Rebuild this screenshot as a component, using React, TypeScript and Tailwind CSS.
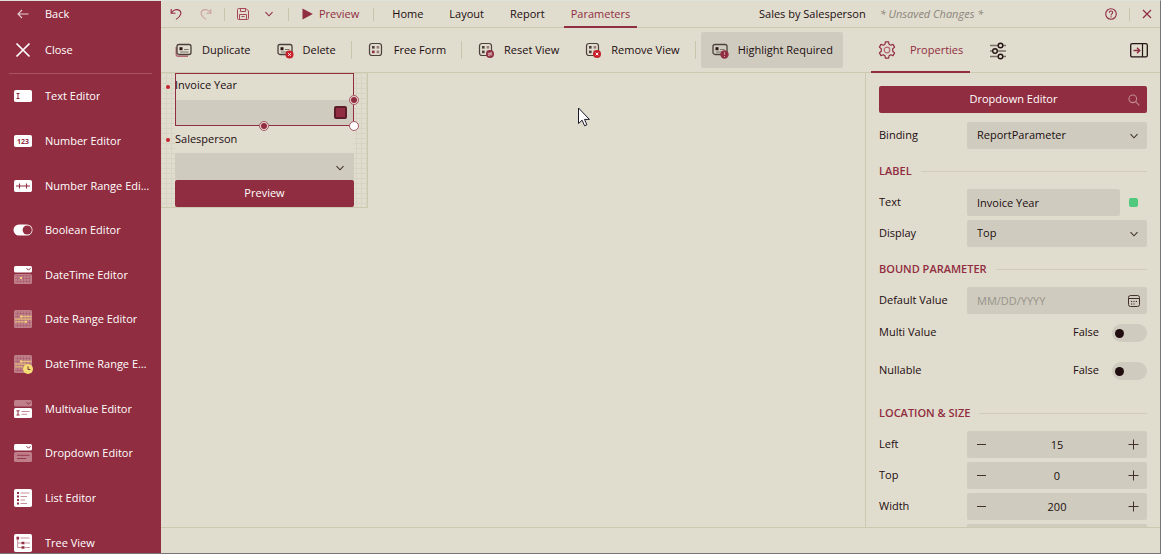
import React, { useState } from 'react';

interface NavItemProps {
  label: string;
  icon: React.ReactNode;
}

interface ToolButtonProps {
  label: string;
  icon: React.ReactNode;
  active?: boolean;
}

const Chevron = ({ className = '' }: { className?: string }) => (
  <svg width="10" height="10" viewBox="0 0 10 10" fill="none" stroke="currentColor" strokeWidth="1.1" className={className}>
    <path d="M1.5 3.2 5 6.8l3.5-3.6" />
  </svg>
);

/* editor icons of the left menu */

const TextIcon = () => (
  <svg width="20" height="20" viewBox="0 0 20 20" fill="#fff">
    <rect x="1" y="4" width="18" height="12" rx="1.8" />
    <path d="M3.5 7.5h3M3.5 12.5h3M5 7.5v5" stroke="#912d40" strokeWidth="1" fill="none" />
  </svg>
);

const NumberIcon = () => (
  <svg width="20" height="20" viewBox="0 0 20 20" fill="#fff">
    <rect x="1" y="4" width="18" height="12" rx="1.8" />
    <text x="10" y="12.6" textAnchor="middle" fontSize="7" fontWeight="700" fontFamily="Open Sans, sans-serif" fill="#912d40">123</text>
  </svg>
);

const RangeIcon = () => (
  <svg width="20" height="20" viewBox="0 0 20 20" fill="#fff">
    <rect x="1" y="4" width="18" height="12" rx="1.8" />
    <path d="M3 10h14M6.5 7.5v5M13.5 7.5v5" stroke="#912d40" strokeWidth="1.1" fill="none" />
  </svg>
);

const BooleanIcon = () => (
  <svg width="20" height="20" viewBox="0 0 20 20">
    <rect x=".5" y="4.5" width="19" height="11" rx="5.5" fill="#fff" />
    <circle cx="14.2" cy="10" r="4.6" fill="#912d40" />
  </svg>
);

const CalendarGrid = ({ top }: { top: number }) => (
  <>
    <rect x="1" y={top} width="18" height={19 - top} rx="1.5" fill="#be7f8b" />
    <path
      d={[4.5, 7.5, 10.5, 13.5, 16.5].map(x => `M${x} ${top + 1}V18`).join('') +
        [4.5, 7.5, 10.5, 13.5, 16.5].filter(y => y > top + 1).map(y => `M2 ${y}H18`).join('')}
      stroke="#a75565" strokeWidth=".5"
    />
  </>
);

const DateTimeIcon = () => (
  <svg width="20" height="20" viewBox="0 0 20 20">
    <CalendarGrid top={9} />
    <rect x="1" y="1" width="18" height="6.5" rx="1.5" fill="#fff" />
    <path d="m13.5 3.2 2 2 2-2" stroke="#912d40" fill="none" />
    <rect x="7" y="12" width="2" height="2" fill="#f3d27a" />
  </svg>
);

const DateRangeIcon = () => (
  <svg width="20" height="20" viewBox="0 0 20 20">
    <CalendarGrid top={1} />
    <path d="M7 7.5h11.5M2 10.2h16.5M2 12.8h11.5" stroke="#e5bf79" strokeWidth="1.3" />
    <path d="M7 6.5h2v2H7zM12 11.8h2v2h-2z" fill="#f3d27a" />
  </svg>
);

const DateTimeRangeIcon = () => (
  <svg width="20" height="20" viewBox="0 0 20 20">
    <CalendarGrid top={1} />
    <path d="M7 7.5h11.5M2 10.2h11M2 12.8h8" stroke="#e5bf79" strokeWidth="1.3" />
    <path d="M7 6.5h2v2H7z" fill="#f3d27a" />
    <circle cx="15" cy="15" r="5" fill="#f6dc74" />
    <path d="M15 12.3V15.5h2.4" stroke="#6f3a35" fill="none" />
  </svg>
);

const MultivalueIcon = () => (
  <svg width="20" height="20" viewBox="0 0 20 20">
    <rect x="1" y="1" width="18" height="6.5" rx="1.5" fill="#be7f8b" />
    <path d="m13.5 3.2 2 2 2-2" stroke="#912d40" fill="none" />
    <rect x="1" y="9" width="18" height="10" rx="1.5" fill="#fff" />
    <path d="M3.5 11.8h3M3.5 16h3M5 11.8V16" stroke="#912d40" />
    <path d="M8.5 12.5h8M8.5 15.3h5.5" stroke="#c68f98" />
  </svg>
);

const DropdownIcon = () => (
  <svg width="20" height="20" viewBox="0 0 20 20">
    <rect x="1" y="1" width="18" height="6.5" rx="1.5" fill="#fff" />
    <path d="m13.5 3.2 2 2 2-2" stroke="#912d40" fill="none" />
    <rect x="1" y="9" width="18" height="10" rx="1.5" fill="#be7f8b" />
    <path d="M4 12.3h12.5M4 15.5h9" stroke="#99394c" />
  </svg>
);

const ListIcon = () => (
  <svg width="20" height="20" viewBox="0 0 20 20">
    <rect x="1" y="1" width="18" height="18" rx="1.8" fill="#fff" />
    <path d="M4 4h2v2H4zM4 7.5h2v2H4zM4 11h2v2H4zM4 14.5h2v2H4z" fill="#912d40" />
    <path d="M7.5 5h9M7.5 8.5h6.5M7.5 12h4.5M7.5 15.5h6.5" stroke="#c68f98" />
  </svg>
);

const TreeIcon = () => (
  <svg width="20" height="20" viewBox="0 0 20 20">
    <rect x="1" y="1" width="18" height="18" rx="1.8" fill="#fff" />
    <path d="M4.7 6v8.500h4M4.700 10h4M7.500 5h9M12 10h5M12 14.500h5" stroke="#c68f98" fill="none" />
    <path d="M3.500 3.800h2.600v2.600H3.500zM8.500 8.700h3v2.600h-3zM8.500 13.200h3v2.600h-3z" fill="#912d40" />
  </svg>
);

/* toolbar icons */

const CardShape = () => (
  <>
    <rect x="2" y="3.5" width="14" height="10" rx="2" fill="none" stroke="#4b403c" strokeWidth="1.3" />
    <path d="M4.5 6.2h3v3h-3z" fill="#2a1515" />
    <path d="M9 8.5h4.5M5 11h8.5" stroke="#7d746c" />
  </>
);

const GridShape = ({ accent = '#4b403c' }: { accent?: string }) => (
  <>
    <rect x="2.5" y="2.5" width="12" height="12" rx="2.5" fill="none" stroke="#4b403c" strokeWidth="1.2" />
    <path d="M5 5h2.6v2.6H5z" fill="#4b403c" />
    <path d="M9.6 5h2.6v2.6H9.6z" fill="#9d7d78" />
    <path d="M5 9.6h2.6v2.6H5z" fill={accent} />
    <path d="M9.6 9.6h2.6v2.6H9.6z" fill="#9d7d78" />
  </>
);

const DuplicateIcon = () => (
  <svg width="18" height="18" viewBox="0 0 18 18">
    <path d="M1.2 6v7.2a2 2 0 0 0 2 2H13" stroke="#b56674" strokeWidth="1.4" fill="none" />
    <CardShape />
  </svg>
);

const DeleteIcon = () => (
  <svg width="18" height="18" viewBox="0 0 18 18">
    <CardShape />
    <circle cx="13.500" cy="13.500" r="4" fill="#c7202b" />
    <path d="m12.200 12.200 2.600 2.600m0-2.600-2.600 2.600" stroke="#fff" />
  </svg>
);

const FreeFormIcon = () => (
  <svg width="18" height="18" viewBox="0 0 18 18"><GridShape accent="#912d40" /></svg>
);

const ResetIcon = () => (
  <svg width="18" height="18" viewBox="0 0 18 18">
    <GridShape />
    <circle cx="13" cy="13" r="4" fill="#912d40" />
    <path d="M10.800 12.300h4l-1.200-1.300M15.200 13.900h-4l1.200 1.300" stroke="#e8cfcf" strokeWidth=".9" fill="none" />
  </svg>
);

const RemoveIcon = () => (
  <svg width="18" height="18" viewBox="0 0 18 18">
    <GridShape />
    <circle cx="13" cy="13" r="4" fill="#c7202b" />
    <path d="m11.700 11.700 2.600 2.600m0-2.600-2.600 2.600" stroke="#fff" />
  </svg>
);

const HighlightIcon = () => (
  <svg width="18" height="18" viewBox="0 0 18 18">
    <CardShape />
    <circle cx="13.500" cy="13.500" r="4.200" fill="#912d40" />
    <path d="M13.500 11v3M13.500 15v1" stroke="#c78d92" strokeWidth="1.100" />
  </svg>
);

const GearIcon = () => (
  <svg width="18" height="18" viewBox="0 0 18 18" fill="none" stroke="#912d40" strokeWidth="1.2">
    <path d="M6.9 3.300 7.400.8h3.200l.5 2.500 1.500.9 2.400-.8 1.600 2.700-1.900 1.700v2.400l1.900 1.700-1.600 2.700-2.400-.8-1.500.9-.5 2.500H7.400l-.5-2.500-1.500-.9-2.400.8-1.600-2.700 1.900-1.700V7.800L1.400 6.100 3 3.400l2.400.8z" strokeLinejoin="round" />
    <circle cx="9" cy="9" r="2.800" stroke="#b56674" />
  </svg>
);

const SlidersIcon = () => (
  <svg width="18" height="18" viewBox="0 0 18 18" fill="none" stroke="#241414" strokeWidth="1.4">
    <path d="M1 3.500h8M14 3.500h3M1 9h2.500M8.500 9H17M1 14.500h8M14 14.500h3" stroke="#7a7068" />
    <circle cx="11.500" cy="3.500" r="2.300" />
    <circle cx="6" cy="9" r="2.300" />
    <circle cx="11.500" cy="14.500" r="2.300" />
  </svg>
);

const CollapseIcon = () => (
  <svg width="18" height="18" viewBox="0 0 18 18" fill="none">
    <rect x=".7" y="2.700" width="16.600" height="13.200" rx="1.500" stroke="#241414" strokeWidth="1.300" />
    <path d="M12.500 3v13" stroke="#241414" strokeWidth="1.200" />
    <path d="M3.500 9.500h6M7 6.700l2.800 2.800L7 12.300" stroke="#912d40" strokeWidth="1.400" />
  </svg>
);

const UndoIcon = ({ className = '' }: { className?: string }) => (
  <svg width="12" height="12" viewBox="0 0 12 12" fill="none" stroke="currentColor" strokeWidth="1.1" className={className}>
    <path d="M1.200 1v4.200h4.300M1.400 5C3.500 1.600 7.200.7 9.600 2.500c2.300 1.900 1.700 5.600-3.600 8.900" />
  </svg>
);

const SaveIcon = () => (
  <svg width="12" height="12" viewBox="0 0 12 12" fill="none" stroke="#a8495a" strokeWidth="1">
    <path d="M1.500.5H9L11.500 3v7.500a1 1 0 0 1-1 1h-9a1 1 0 0 1-1-1v-9a1 1 0 0 1 1-1z" />
    <path d="M3.500.5v3h5v-3M2.500 11.500v-5h7v5M4.500 8.500h3" />
  </svg>
);

const CalendarIcon = () => (
  <svg width="12" height="12" viewBox="0 0 12 12" fill="none" stroke="#43302e">
    <rect x=".5" y=".5" width="11" height="11" rx="2" />
    <path d="M.5 3.500h11" />
    <path d="M3 6.500h1.200M5.400 6.500h1.200M7.800 6.500H9M3 9h1.200M5.400 9h1.200" strokeWidth="1.200" />
  </svg>
);

const SearchIcon = () => (
  <svg width="12" height="12" viewBox="0 0 12 12" fill="none" stroke="#c08b93" strokeWidth="1.1">
    <circle cx="4.800" cy="4.800" r="3.800" />
    <path d="m7.600 7.600 3.700 3.700" />
  </svg>
);

const Separator = ({ className = 'h-[18px]' }: { className?: string }) => (
  <span className={`w-px shrink-0 bg-[#c9c4ac] ${className}`} />
);

function NavItem({ label, icon }: NavItemProps) {
  return (
    <button type="button" className="flex w-full min-w-0 items-center gap-3 pr-[10px] pl-[13px] text-left">
      <span className="flex w-5 shrink-0 justify-center">{icon}</span>
      <span className="truncate">{label}</span>
    </button>
  );
}

function ToolButton({ label, icon, active }: ToolButtonProps) {
  return (
    <button type="button" className={`flex h-9 shrink-0 items-center gap-[9px] rounded-xs px-[10px] whitespace-nowrap ${active ? 'bg-[#cfccbf]' : ''}`}>
      {icon}
      <span>{label}</span>
    </button>
  );
}

function SectionTitle({ children }: { children: React.ReactNode }) {
  return (
    <div className="flex h-10 items-center gap-[9px] pt-1">
      <h3 className="font-semibold text-[#912d40]">{children}</h3>
      <span className="h-px flex-1 bg-[#d3cbb8]" />
    </div>
  );
}

function SelectRow({ id, label, value }: { id: string; label: string; value: string }) {
  return (
    <div className="flex items-center">
      <label htmlFor={id} className="w-[88px] shrink-0 pb-[2px]">{label}</label>
      <div className="relative flex-1">
        <select id={id} defaultValue={value} className="block h-[27px] w-full appearance-none rounded-xs bg-[#cfccbf] px-[10px] pb-[2px] outline-none">
          <option>{value}</option>
        </select>
        <Chevron className="pointer-events-none absolute top-[9px] right-2 text-[#43302e]" />
      </div>
    </div>
  );
}

function ToggleRow({ id, label }: { id: string; label: string }) {
  const [on, setOn] = useState(false);
  return (
    <div className="flex h-[38px] items-center">
      <label htmlFor={id} className="flex-1 pb-[2px]">{label}</label>
      <span className="mr-[13px] pb-[2px]">{on ? 'True' : 'False'}</span>
      <input
        id={id}
        type="checkbox"
        checked={on}
        onChange={e => setOn(e.target.checked)}
        className="flex h-[18px] w-[35px] appearance-none items-center rounded-full bg-[#cfccbf] px-[3px] before:h-[9px] before:w-[9px] before:rounded-full before:bg-[#220d10] checked:justify-end"
      />
    </div>
  );
}

function NumberRow({ id, label, initial }: { id: string; label: string; initial: number }) {
  const [value, setValue] = useState(initial);
  return (
    <div className="flex items-center">
      <label htmlFor={id} className="w-[88px] shrink-0 pb-[2px]">{label}</label>
      <div className="flex h-[27px] min-w-0 flex-1 items-center rounded-xs bg-[#cfccbf]">
        <button type="button" aria-label={`Decrease ${label}`} onClick={() => setValue(value - 1)} className="flex h-full w-7 items-center justify-center">
          <svg width="11" height="11" viewBox="0 0 11 11" stroke="#43302e"><path d="M1 5.500h9" /></svg>
        </button>
        <input id={id} value={value} onChange={e => setValue(Number(e.target.value) || 0)} className="h-full min-w-0 flex-1 text-center outline-none" />
        <button type="button" aria-label={`Increase ${label}`} onClick={() => setValue(value + 1)} className="flex h-full w-7 items-center justify-center">
          <svg width="11" height="11" viewBox="0 0 11 11" stroke="#43302e"><path d="M.5 5.500h10M5.500.5v10" /></svg>
        </button>
      </div>
    </div>
  );
}

function Sidebar() {
  return (
    <nav className="flex w-[161px] shrink-0 flex-col overflow-hidden bg-[#912d40] text-white">
      <button type="button" className="flex h-[26px] shrink-0 items-center gap-3 pl-[13px] text-left">
        <span className="flex w-5 justify-center">
          <svg width="12" height="10" viewBox="0 0 12 10" fill="none" stroke="#e9cfd3" strokeWidth="1.100"><path d="M11.500 5H1M5 1 1 5l4 4" /></svg>
        </span>
        Back
      </button>
      <button type="button" className="flex h-[46px] shrink-0 items-center gap-3 pb-px pl-[13px] text-left">
        <span className="flex w-5 justify-center">
          <svg width="16" height="16" viewBox="0 0 16 16" fill="none" stroke="#fff" strokeWidth="1.700"><path d="m1.500 1.500 13 13m0-13-13 13" /></svg>
        </span>
        Close
      </button>
      <span className="mx-[9px] h-px shrink-0 bg-[#a75362]" />
      <div className="grid h-[491px] shrink-0 auto-rows-fr">
        <NavItem label="Text Editor" icon={<TextIcon />} />
        <NavItem label="Number Editor" icon={<NumberIcon />} />
        <NavItem label="Number Range Editor" icon={<RangeIcon />} />
        <NavItem label="Boolean Editor" icon={<BooleanIcon />} />
        <NavItem label="DateTime Editor" icon={<DateTimeIcon />} />
        <NavItem label="Date Range Editor" icon={<DateRangeIcon />} />
        <NavItem label="DateTime Range Editor" icon={<DateTimeRangeIcon />} />
        <NavItem label="Multivalue Editor" icon={<MultivalueIcon />} />
        <NavItem label="Dropdown Editor" icon={<DropdownIcon />} />
        <NavItem label="List Editor" icon={<ListIcon />} />
        <NavItem label="Tree View" icon={<TreeIcon />} />
      </div>
    </nav>
  );
}

function MenuBar() {
  return (
    <header className="flex h-[27px] shrink-0 items-center border-b border-[#cdc8b0] pr-2 pl-[9px] whitespace-nowrap">
      <button type="button" aria-label="Undo" className="text-[#912d40]"><UndoIcon /></button>
      <button type="button" aria-label="Redo" className="ml-[18px] text-[#c9a19f]"><UndoIcon className="-scale-x-100" /></button>
      <Separator className="ml-3 h-[13px]" />
      <button type="button" aria-label="Save" className="ml-3"><SaveIcon /></button>
      <button type="button" aria-label="Save options" className="ml-[15px] text-[#912d40]"><Chevron /></button>
      <Separator className="ml-[14px] h-[13px]" />
      <button type="button" className="ml-[13px] flex items-center gap-[6px] text-[#912d40]">
        <svg width="11" height="12" viewBox="0 0 11 12" fill="#912d40"><path d="M.5.5v11L10.800 6z" /></svg>
        Preview
      </button>
      <Separator className="ml-[14px] h-[13px]" />
      <nav className="ml-[11px] flex h-full items-center gap-3 self-start">
        <a href="#home" className="px-[7px]">Home</a>
        <a href="#layout" className="px-[7px]">Layout</a>
        <a href="#report" className="px-[7px]">Report</a>
        <a href="#parameters" className="-mb-px flex h-[27px] items-center border-b-2 border-[#912d40] px-[7px] pt-px text-[#912d40]">Parameters</a>
      </nav>
      <div className="flex flex-1 justify-center gap-[14px]">
        <span>Sales by Salesperson</span>
        <em className="text-[#8b857b]">* Unsaved Changes *</em>
      </div>
      <button type="button" aria-label="Help">
        <svg width="12" height="12" viewBox="0 0 12 12" fill="none" stroke="#912d40" strokeWidth="1.100">
          <circle cx="6" cy="6" r="5.300" />
          <path d="M4.300 4.800c0-2.300 3.400-2.300 3.400-.2C7.700 5.800 6 5.900 6 7.400M6 8.300v1.200" />
        </svg>
      </button>
      <Separator className="ml-3 h-[13px]" />
      <button type="button" aria-label="Close designer" className="ml-3">
        <svg width="10" height="10" viewBox="0 0 10 10" fill="none" stroke="#912d40" strokeWidth="1.200"><path d="m1 1 8 8m0-8L1 9" /></svg>
      </button>
    </header>
  );
}

function ToolBar() {
  return (
    <div className="flex h-[45px] shrink-0 items-center border-b border-[#cdc8b0] pr-3 pl-1">
      <div className="flex flex-1 items-center gap-[5px]">
        <ToolButton label="Duplicate" icon={<DuplicateIcon />} />
        <ToolButton label="Delete" icon={<DeleteIcon />} />
        <Separator />
        <ToolButton label="Free Form" icon={<FreeFormIcon />} />
        <Separator />
        <ToolButton label="Reset View" icon={<ResetIcon />} />
        <ToolButton label="Remove View" icon={<RemoveIcon />} />
        <Separator />
        <ToolButton label="Highlight Required" icon={<HighlightIcon />} active />
      </div>
      <div className="flex w-[277px] shrink-0 items-center self-stretch">
        <button type="button" className="-mb-px flex h-[45px] items-center gap-[14px] border-b-2 border-[#912d40] px-[7px] pt-px text-[#912d40]">
          <GearIcon />
          Properties
        </button>
        <button type="button" aria-label="Settings" className="ml-[19px] pt-px"><SlidersIcon /></button>
        <button type="button" aria-label="Collapse panel" className="ml-auto"><CollapseIcon /></button>
      </div>
    </div>
  );
}

const Handle = ({ className }: { className: string }) => (
  <span className={`absolute z-10 flex h-[10px] w-[10px] items-center justify-center rounded-full border border-[#a95766] bg-[#e9d9d2] ${className}`}>
    <span className="h-[6px] w-[6px] rounded-full bg-[#912d40]" />
  </span>
);

function DesignSurface() {
  return (
    <main className="relative flex-1 overflow-hidden">
      <div className="w-[207px] border-r border-b border-[#cdc8b0] bg-[linear-gradient(to_right,#d8d4c4_1px,transparent_1px),linear-gradient(to_bottom,#d8d4c4_1px,transparent_1px)] bg-size-[5px_5px] pr-[13px] pl-[14px]">
        <div className="relative border border-[#912d40] bg-[#e0dcce]">
          <span className="absolute top-[11px] -left-[10px] h-1 w-1 rounded-full bg-[#c7202b]" />
          <label htmlFor="invoice-year" className="-ml-px block h-[26px] leading-[22px]">Invoice Year</label>
          <div className="flex h-[25px] items-center bg-[#cfccbf] pr-[6px]">
            <input id="invoice-year" className="h-full min-w-0 flex-1 outline-none" />
            <span className="h-[13px] w-[13px] rounded-xs border-2 border-[#5c1d2a] bg-[#912d40]" />
          </div>
          <Handle className="top-[21px] -right-[6px]" />
          <Handle className="-bottom-[6px] left-[83px]" />
          <span className="absolute -right-[6px] -bottom-[6px] z-10 h-[10px] w-[10px] rounded-full border border-[#a95766] bg-white" />
        </div>
        <div className="relative bg-[#e0dcce]">
          <span className="absolute top-[12px] -left-[9px] h-1 w-1 rounded-full bg-[#c7202b]" />
          <label htmlFor="salesperson" className="block h-[27px] leading-[25px]">Salesperson</label>
          <div className="relative">
            <select id="salesperson" className="block h-[27px] w-full appearance-none bg-[#cfccbf] px-2 outline-none" />
            <Chevron className="pointer-events-none absolute top-[10px] right-[9px] text-[#43302e]" />
          </div>
        </div>
        <button type="button" className="block h-[27px] w-full rounded-xs bg-[#912d40] pb-px font-medium text-white">Preview</button>
      </div>
      <svg width="14" height="20" viewBox="0 0 14 20" className="absolute top-[34px] left-[416px]">
        <path d="M1.500 1v15.500l3.600-3.300 2.500 5.600 2.300-1-2.400-5.400h4.900z" fill="#fff" stroke="#1a1a2a" strokeWidth="1" />
      </svg>
    </main>
  );
}

function PropertiesPanel() {
  return (
    <aside className="w-[295px] shrink-0 overflow-hidden border-l border-[#cdc8b0] px-[13px] pt-[13px]">
      <button type="button" className="mb-[9px] flex h-[27px] w-full items-center rounded-xs bg-[#912d40] pr-[7px] pl-2 text-white">
        <span className="flex-1 pb-px pl-3 text-center font-medium">Dropdown Editor</span>
        <SearchIcon />
      </button>
      <SelectRow id="binding" label="Binding" value="ReportParameter" />

      <SectionTitle>LABEL</SectionTitle>
      <div className="flex flex-col gap-1">
        <div className="flex items-center">
          <label htmlFor="text" className="w-[88px] shrink-0 pb-[2px]">Text</label>
          <input id="text" defaultValue="Invoice Year" className="h-[27px] min-w-0 flex-1 rounded-xs bg-[#cfccbf] px-[10px] outline-none" />
          <button type="button" aria-label="Text options" className="mx-[9px] h-[9px] w-[9px] rounded-xs bg-[#50c97f]" />
        </div>
        <SelectRow id="display" label="Display" value="Top" />
      </div>

      <SectionTitle>BOUND PARAMETER</SectionTitle>
      <div className="flex items-center">
        <label htmlFor="default-value" className="w-[88px] shrink-0 pb-[2px]">Default Value</label>
        <div className="flex h-[27px] min-w-0 flex-1 items-center rounded-xs bg-[#cfccbf] pr-[7px]">
          <input id="default-value" placeholder="MM/DD/YYYY" className="h-full min-w-0 flex-1 px-[10px] outline-none placeholder:text-[#98938a]" />
          <CalendarIcon />
        </div>
      </div>
      <div className="pb-px">
        <ToggleRow id="multi-value" label="Multi Value" />
        <ToggleRow id="nullable" label="Nullable" />
      </div>

      <SectionTitle>LOCATION &amp; SIZE</SectionTitle>
      <div className="flex flex-col gap-1">
        <NumberRow id="left" label="Left" initial={15} />
        <NumberRow id="top" label="Top" initial={0} />
        <NumberRow id="width" label="Width" initial={200} />
        <NumberRow id="height" label="Height" initial={60} />
      </div>
    </aside>
  );
}

export default function App() {
  return (
    <div className="flex h-screen overflow-hidden border-t border-r border-b border-t-[#dfe1dc] border-r-[#77757a] border-b-[#77757a] bg-[#e0dcce] font-['Open_Sans',sans-serif] text-[11px] leading-4 text-[#220d10]">
      <Sidebar />
      <div className="flex min-w-0 flex-1 flex-col">
        <MenuBar />
        <ToolBar />
        <div className="flex min-h-0 flex-1">
          <DesignSurface />
          <PropertiesPanel />
        </div>
        <footer className="h-[26px] shrink-0 border-t border-[#cdc8b0]" />
      </div>
    </div>
  );
}
